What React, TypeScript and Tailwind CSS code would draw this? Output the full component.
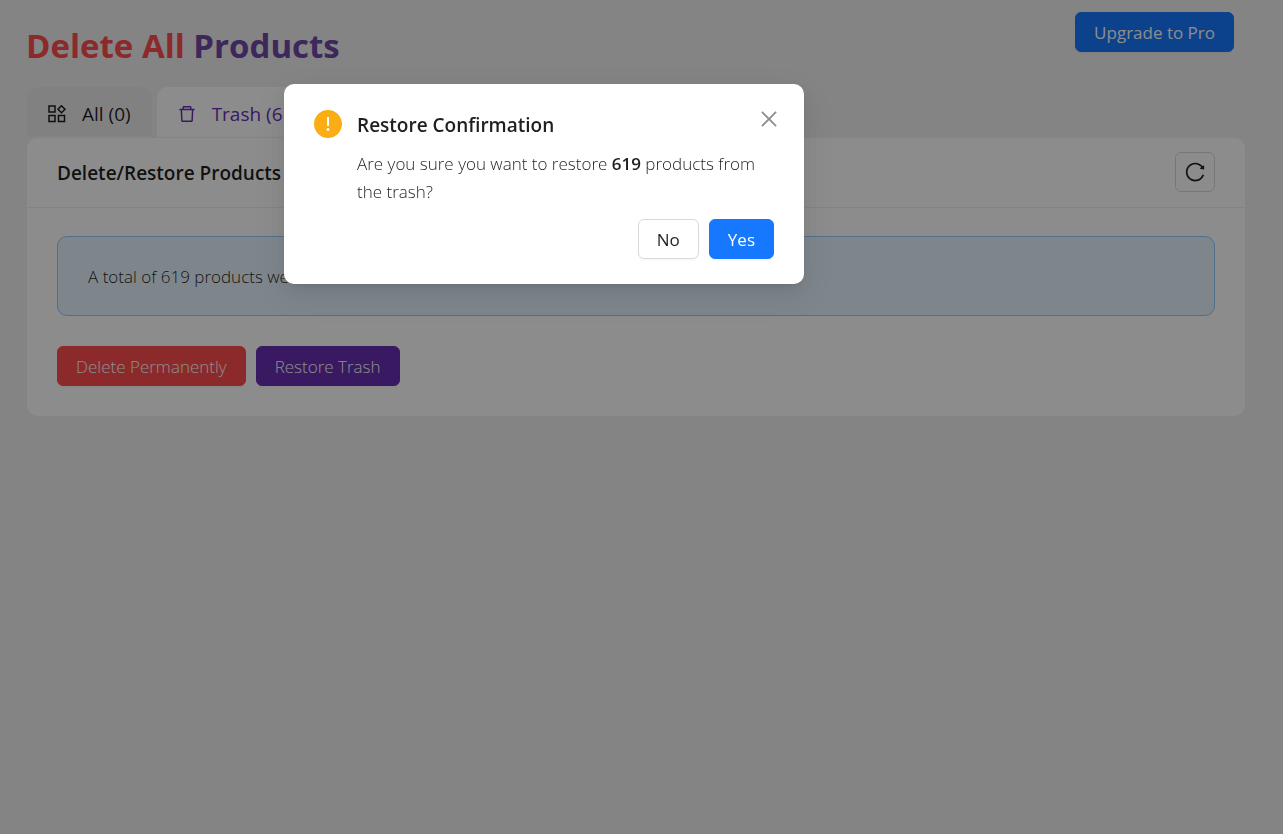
import type { ReactNode } from "react";
import {
  AiFillExclamationCircle,
  AiOutlineClose,
  AiOutlineDelete,
  AiOutlineReload,
} from "react-icons/ai";
import { clsx } from "clsx";

const TRASH_COUNT = 619;

// trims the empty margin around the ant design glyphs
const ICON_BOX = "64 64 896 896";

function ProductIcon() {
  return (
    <svg
      viewBox="0 0 18 18"
      className="size-[18px]"
      fill="none"
      stroke="currentColor"
      strokeWidth="1.5"
      aria-hidden="true"
    >
      <rect x="1" y="1" width="6" height="6" />
      <rect x="1" y="10.5" width="6" height="6" />
      <rect x="10.5" y="10.5" width="6" height="6" />
      <path d="M13.5 0.7 17 4.2 13.5 7.7 10 4.2Z" />
    </svg>
  );
}

interface ButtonProps {
  children: ReactNode;
  className?: string;
}

function Button({ children, className }: ButtonProps) {
  return (
    <button
      type="button"
      className={clsx(
        "h-10 cursor-pointer rounded-md border px-[18px] pt-0.5 text-[17px] leading-7 whitespace-nowrap shadow-[0_2px_0_rgba(0,0,0,0.02)]",
        className,
      )}
    >
      {children}
    </button>
  );
}

interface TabProps {
  icon: ReactNode;
  label: string;
  active?: boolean;
}

function Tab({ icon, label, active }: TabProps) {
  return (
    <button
      type="button"
      role="tab"
      aria-selected={!!active}
      className={clsx(
        "flex cursor-pointer items-center gap-4 rounded-t-[10px] px-[21px] pt-1 text-[19px] leading-7 font-normal",
        active
          ? "h-[50px] bg-white text-[#692fb2]"
          : "h-[49px] bg-[#ececed] text-black/88",
      )}
    >
      {icon}
      {label}
    </button>
  );
}

function ConfirmModal() {
  return (
    <div className="fixed inset-0 bg-black/45 pt-[84px] pr-[195px]">
      <div
        role="dialog"
        aria-modal="true"
        aria-labelledby="confirm-title"
        className="relative mx-auto w-full max-w-[520px] rounded-[10px] bg-white px-[30px] py-[25px] shadow-[0_8px_20px_0_rgba(0,0,0,0.08),0_4px_8px_-5px_rgba(0,0,0,0.12),0_11px_35px_10px_rgba(0,0,0,0.05)]"
      >
        <button
          type="button"
          aria-label="Close"
          className="absolute top-5 right-5 flex size-[30px] cursor-pointer items-center justify-center text-black/45"
        >
          <AiOutlineClose viewBox={ICON_BOX} className="size-5" />
        </button>
        <div className="flex gap-[15px]">
          <AiFillExclamationCircle
            viewBox={ICON_BOX}
            className="mt-px size-7 shrink-0 text-[#faad14]"
          />
          <div>
            <h2
              id="confirm-title"
              className="text-[19px] leading-8 font-semibold text-black/88"
            >
              Restore Confirmation
            </h2>
            <p className="mt-2 pt-px text-[17px] leading-7 text-black/88">
              Are you sure you want to restore{" "}
              <strong className="font-semibold">{TRASH_COUNT}</strong> products
              from the trash?
            </p>
          </div>
        </div>
        <div className="mt-[13px] flex justify-end gap-[10px]">
          <Button className="border-[#d9d9d9] bg-white font-normal text-black/88">
            No
          </Button>
          <Button className="border-[#1677ff] bg-[#1677ff] font-normal text-white">
            Yes
          </Button>
        </div>
      </div>
    </div>
  );
}

export default function App() {
  return (
    <div className="min-h-screen bg-[#f0f0f1] font-['Open_Sans','Noto_Sans',sans-serif] font-light">
      <header className="flex items-start justify-between pt-3 pr-[49px] pl-[26px]">
        <h1 className="mt-3 text-[33px] leading-[44px] font-bold text-[#6f47a6]">
          <span className="text-[#ff4d4f]">Delete All</span> Products
        </h1>
        <Button className="border-[#1677ff] bg-[#1677ff] font-normal text-white">
          Upgrade to Pro
        </Button>
      </header>

      <main className="mt-[19px] pr-[38px] pl-[27px]">
        <div role="tablist" className="flex h-[51px] items-start gap-[5px]">
          <Tab icon={<ProductIcon />} label="All (0)" />
          <Tab
            active
            icon={
              <AiOutlineDelete viewBox={ICON_BOX} className="size-[18px]" />
            }
            label={`Trash (${TRASH_COUNT})`}
          />
        </div>

        <section className="rounded-[10px] bg-white">
          <div className="flex h-[70px] items-center justify-between border-b border-[#f0f0f0] px-[30px] pb-px">
            <h2 className="pt-0.5 text-[19px] leading-8 font-semibold text-black/88">
              Delete/Restore Products
            </h2>
            <button
              type="button"
              aria-label="Reload"
              className="flex size-10 cursor-pointer items-center justify-center rounded-md border border-[#d9d9d9] bg-white text-black/88"
            >
              <AiOutlineReload viewBox={ICON_BOX} className="size-5" />
            </button>
          </div>
          <div className="px-[30px] pt-7 pb-[30px]">
            <div
              role="alert"
              className="rounded-[10px] border border-[#91caff] bg-[#e6f4ff] px-[30px] pt-[26px] pb-6 text-[17px] leading-7 text-black/88"
            >
              A total of {TRASH_COUNT} products were found in the trash.
            </div>
            <div className="mt-[30px] flex gap-[10px]">
              <Button className="border-[#ff4d4f] bg-[#ff4d4f] text-white">
                Delete Permanently
              </Button>
              <Button className="border-[#692fb2] bg-[#692fb2] text-white">
                Restore Trash
              </Button>
            </div>
          </div>
        </section>
      </main>

      <ConfirmModal />
    </div>
  );
}
